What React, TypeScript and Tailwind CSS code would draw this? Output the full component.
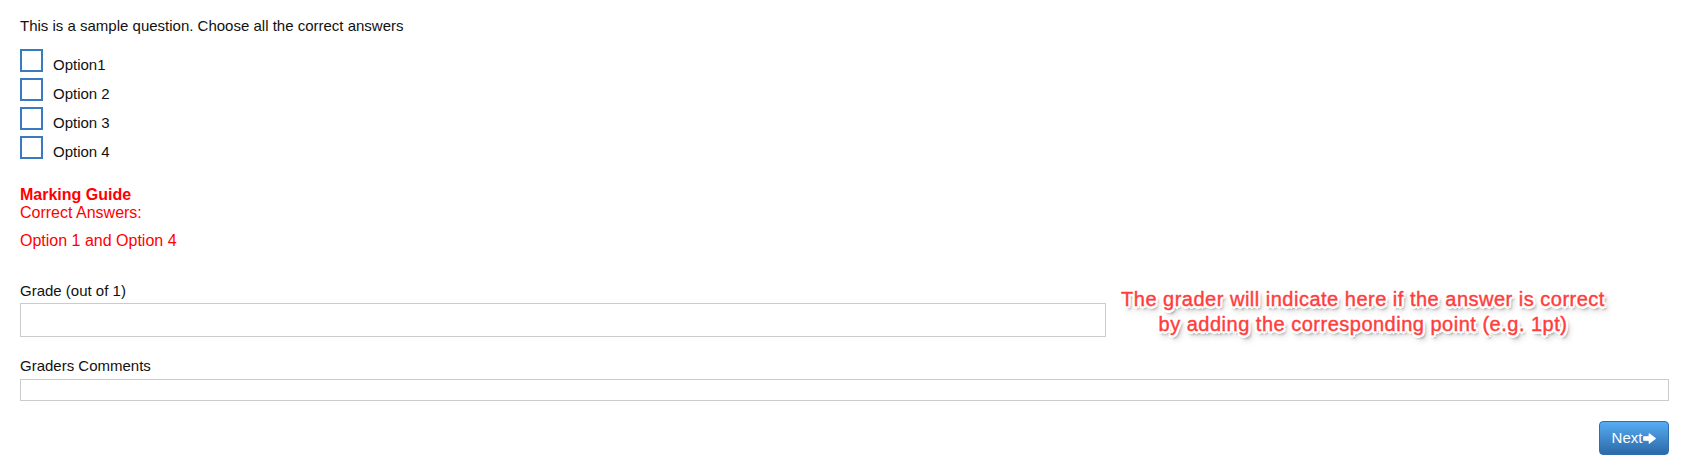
import React from "react";

function ArrowIcon() {
  return (
    <svg width="13" height="11" viewBox="0 0 13 11" className="ml-[1px]">
      <path
        d="M0.8 3.8 H6.3 V0.9 L12.2 5.5 L6.3 10.1 V7.2 H0.8 Z"
        fill="#fff"
        stroke="#fff"
        strokeWidth="1.3"
        strokeLinejoin="round"
      />
    </svg>
  );
}

export default function App() {
  const options = ["Option1", "Option 2", "Option 3", "Option 4"];
  return (
    <div className="relative min-h-[470px] bg-white pl-[20px] pr-[18px] pt-[16px] font-['Liberation_Sans',Arial,sans-serif] text-[15px] leading-[20px] text-[#111]">
      <p>This is a sample question. Choose all the correct answers</p>

      <div className="mt-[13px] flex flex-col gap-[6px]">
        {options.map((o) => (
          <label key={o} className="flex h-[23px] items-start">
            <span className="h-[23px] w-[23px] shrink-0 border-2 border-[#3a7bbf] bg-white" />
            <span className="ml-[10px] mt-[6px] leading-[20px]">{o}</span>
          </label>
        ))}
      </div>

      <div className="mt-[27px] text-[16px] leading-[18px] text-[#ff0000]">
        <div className="font-bold">Marking Guide</div>
        <div>Correct Answers:</div>
        <div className="mt-[10px]">Option 1 and Option 4</div>
      </div>

      <div className="mt-[31px]">Grade (out of 1)</div>
      <div className="mt-[2px] h-[34px] w-[1086px] border border-[#cccccc] bg-white" />

      <div className="mt-[19px]">Graders Comments</div>
      <div className="mt-[3px] h-[22px] w-full border border-[#cccccc] bg-white" />

      <div className="mt-[20px] flex justify-end">
        <button className="flex h-[34px] w-[70px] items-center justify-center rounded-[4px] border border-[#2f6fae] bg-gradient-to-b from-[#56acf3] to-[#2d6aa8] text-[15px] text-white">
          <span>Next</span>
          <ArrowIcon />
        </button>
      </div>

      <div className="absolute left-[1113px] top-[287px] w-[500px] text-center text-[20px] leading-[25px] tracking-[0.5px] text-[#ff3d3d] [-webkit-text-stroke:0.4px_#ff3d3d] [text-shadow:-2px_-2px_0_#fff,2px_-2px_0_#fff,-2px_2px_0_#fff,2px_2px_0_#fff,0_-2.5px_0_#fff,0_2.5px_0_#fff,-2.5px_0_0_#fff,2.5px_0_0_#fff,2px_3px_3px_rgba(0,0,0,0.55),3px_5px_6px_rgba(0,0,0,0.3)]">
        The grader will indicate here if the answer is correct
        <br />
        by adding the corresponding point (e.g. 1pt)
      </div>
    </div>
  );
}
